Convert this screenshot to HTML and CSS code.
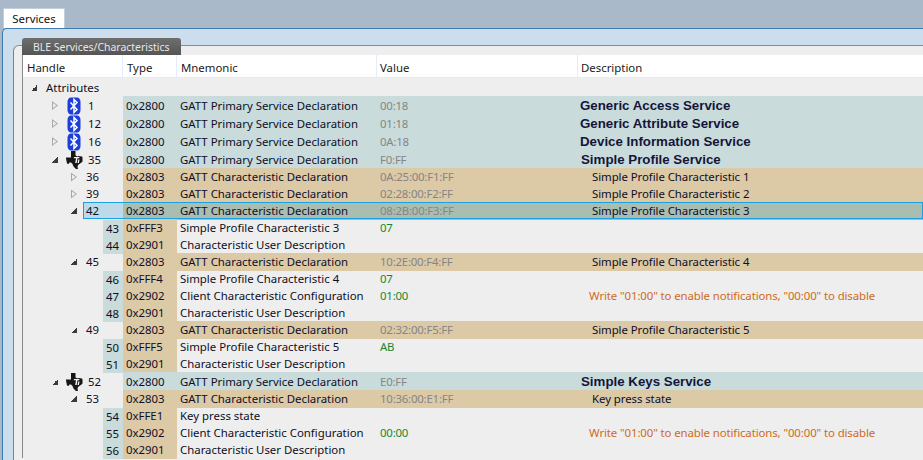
FILE: index.html
```html
<!DOCTYPE html>
<html lang="en">
<head>
<meta charset="utf-8">
<title>Services</title>
<link rel="stylesheet" href="styles.css">
</head>
<body>
<svg class="defs" width="0" height="0" aria-hidden="true">
  <symbol id="bt" viewBox="0 0 14 18">
    <path d="M4 0.500h6c2 0 3.500 2 3.500 4.500v8c0 2.500-1.500 4.500-3.500 4.500h-6c-2 0-3.500-2-3.500-4.500v-8c0-2.500 1.500-4.500 3.500-4.500z" fill="#1b3fd8"/>
    <path d="M3.500 5.500l6.500 7-3 3v-13l3 3-6.500 7" fill="none" stroke="#fff" stroke-width="1.500"/>
  </symbol>
  <symbol id="ti" viewBox="0 0 17 18">
    <path d="M5 0h4.500v4.500l2 1 1-.5 3.500.5.500 1v4l-1 1-3.500 2.500-.5 2 .5 2h-2l-2.500-2.500-1-2.500-1.500-1.500h-1.500l-1 1.500-1.500-.5-.5-2.500L0 7.500V6.500h5z" fill="#161616"/>
    <path d="M8 6h5.500l-.3 1.200h-1.700l-.8 4.800H9.200l.8-4.800H7.800z" fill="#f2f2f2"/>
    <path d="M12.200 8.500h1.300l-.6 3.500h-1.300z" fill="#f2f2f2"/>
  </symbol>
</svg>
<div class="app">
  <nav class="tabbar"><div class="tab">Services</div></nav>
  <main class="panel">
    <section class="group">
      <div class="group-title">BLE Services/Characteristics</div>
      <div class="table">
        <div class="row head"><div class="h1">Handle</div><div class="h2">Type</div><div class="h3">Mnemonic</div><div class="h4">Value</div><div class="h5">Description</div></div>
        <div class="row tall root"><div class="handle"><i class="arrow open"></i><span>Attributes</span></div></div>

        <div class="row tall svc"><div class="handle lv1"><i class="arrow closed"></i><svg class="icon bt"><use href="#bt"/></svg><span>1</span></div><div class="type">0x2800</div><div class="mn">GATT Primary Service Declaration</div><div class="val grey">00:18</div><div class="desc bold">Generic Access Service</div></div>
        <div class="row tall svc"><div class="handle lv1"><i class="arrow closed"></i><svg class="icon bt"><use href="#bt"/></svg><span>12</span></div><div class="type">0x2800</div><div class="mn">GATT Primary Service Declaration</div><div class="val grey">01:18</div><div class="desc bold">Generic Attribute Service</div></div>
        <div class="row tall svc"><div class="handle lv1"><i class="arrow closed"></i><svg class="icon bt"><use href="#bt"/></svg><span>16</span></div><div class="type">0x2800</div><div class="mn">GATT Primary Service Declaration</div><div class="val grey">0A:18</div><div class="desc bold">Device Information Service</div></div>
        <div class="row tall svc"><div class="handle lv1"><i class="arrow open"></i><svg class="icon ti"><use href="#ti"/></svg><span>35</span></div><div class="type">0x2800</div><div class="mn">GATT Primary Service Declaration</div><div class="val grey">F0:FF</div><div class="desc bold shift">Simple Profile Service</div></div>

        <div class="row chr"><div class="handle lv2"><i class="arrow closed"></i><span>36</span></div><div class="type">0x2803</div><div class="mn">GATT Characteristic Declaration</div><div class="val grey">0A:25:00:F1:FF</div><div class="desc sub">Simple Profile Characteristic 1</div></div>
        <div class="row chr"><div class="handle lv2"><i class="arrow closed"></i><span>39</span></div><div class="type">0x2803</div><div class="mn">GATT Characteristic Declaration</div><div class="val grey">02:28:00:F2:FF</div><div class="desc sub">Simple Profile Characteristic 2</div></div>
        <div class="row chr selected"><div class="handle lv2"><i class="arrow open"></i><span>42</span></div><div class="type">0x2803</div><div class="mn">GATT Characteristic Declaration</div><div class="val grey">08:2B:00:F3:FF</div><div class="desc sub">Simple Profile Characteristic 3</div></div>
        <div class="row attr"><div class="handle lv3"><span>43</span></div><div class="type">0xFFF3</div><div class="mn">Simple Profile Characteristic 3</div><div class="val green">07</div></div>
        <div class="row attr"><div class="handle lv3"><span>44</span></div><div class="type">0x2901</div><div class="mn">Characteristic User Description</div></div>

        <div class="row chr"><div class="handle lv2"><i class="arrow open"></i><span>45</span></div><div class="type">0x2803</div><div class="mn">GATT Characteristic Declaration</div><div class="val grey">10:2E:00:F4:FF</div><div class="desc sub">Simple Profile Characteristic 4</div></div>
        <div class="row attr"><div class="handle lv3"><span>46</span></div><div class="type">0xFFF4</div><div class="mn">Simple Profile Characteristic 4</div><div class="val green">07</div></div>
        <div class="row attr"><div class="handle lv3"><span>47</span></div><div class="type">0x2902</div><div class="mn">Client Characteristic Configuration</div><div class="val green">01:00</div><div class="desc note">Write "01:00" to enable notifications, "00:00" to disable</div></div>
        <div class="row attr"><div class="handle lv3"><span>48</span></div><div class="type">0x2901</div><div class="mn">Characteristic User Description</div></div>

        <div class="row chr"><div class="handle lv2"><i class="arrow open"></i><span>49</span></div><div class="type">0x2803</div><div class="mn">GATT Characteristic Declaration</div><div class="val grey">02:32:00:F5:FF</div><div class="desc sub">Simple Profile Characteristic 5</div></div>
        <div class="row attr"><div class="handle lv3"><span>50</span></div><div class="type">0xFFF5</div><div class="mn">Simple Profile Characteristic 5</div><div class="val green">AB</div></div>
        <div class="row attr"><div class="handle lv3"><span>51</span></div><div class="type">0x2901</div><div class="mn">Characteristic User Description</div></div>

        <div class="row tall svc"><div class="handle lv1"><i class="arrow open"></i><svg class="icon ti"><use href="#ti"/></svg><span>52</span></div><div class="type">0x2800</div><div class="mn">GATT Primary Service Declaration</div><div class="val grey">E0:FF</div><div class="desc bold shift">Simple Keys Service</div></div>
        <div class="row chr"><div class="handle lv2"><i class="arrow open"></i><span>53</span></div><div class="type">0x2803</div><div class="mn">GATT Characteristic Declaration</div><div class="val grey">10:36:00:E1:FF</div><div class="desc sub">Key press state</div></div>
        <div class="row attr"><div class="handle lv3"><span>54</span></div><div class="type">0xFFE1</div><div class="mn">Key press state</div></div>
        <div class="row attr"><div class="handle lv3"><span>55</span></div><div class="type">0x2902</div><div class="mn">Client Characteristic Configuration</div><div class="val green">00:00</div><div class="desc note">Write "01:00" to enable notifications, "00:00" to disable</div></div>
        <div class="row attr"><div class="handle lv3"><span>56</span></div><div class="type">0x2901</div><div class="mn">Characteristic User Description</div></div>
      </div>
    </section>
  </main>
</div>
</body>
</html>
```
FILE: styles.css
```css
* { box-sizing: border-box; }
html, body { margin: 0; height: 100%; overflow: hidden; }
body { background: #a9b9c9; font: 11.4px/18px "Noto Sans", "Open Sans", sans-serif; color: #0e0e26; }
.defs { position: absolute; }
.app { width: 923px; height: 460px; display: flex; flex-direction: column; overflow: hidden; }
.tabbar { height: 28px; padding: 8px 0 0 3px; flex: none; }
.tab { width: 62px; height: 20px; background: #fff; border: 1px solid #c4ced8; border-bottom: 0; text-align: center; line-height: 20px; color: #111; }
.panel { flex: 1; min-height: 0; margin-left: 2px; padding: 16px 0 0 10px; background: #ccdded; border: 1px solid #3d7bb0; border-right: 0; border-bottom: 0; border-top-left-radius: 5px; }
.group { height: 100%; background: #eee; border-top: 1px solid #8c8c8c; border-left: 1px solid #808080; border-top-left-radius: 6px; padding-left: 8px; }
.group-title { width: 159px; height: 17px; margin-top: -8px; background: linear-gradient(#6e6e6e, #555); border-radius: 3px 3px 0 0; color: #e8e8e8; padding-left: 11px; font-size: 10.45px; line-height: 18px; white-space: nowrap; }
.table { border-left: 1px solid #8a8a8a; }
.row { display: grid; grid-template-columns: 100px 54px 200px 201px 1fr; height: 17px; align-items: stretch; white-space: nowrap; position: relative; }
.row.tall { height: 18px; line-height: 19px; }
.row > div { min-width: 0; }
.head { height: 23px; background: #fff; line-height: 25px; color: #1a1a1a; border-bottom: 1px solid #e3edf9; }
.head > div { border-right: 1px solid #e3edf9; }
.head > div:last-child { border-right: 0; }
.h1 { padding-left: 4px; }
.h2 { padding-left: 4px; }
.h3 { padding-left: 4px; }
.h4 { padding-left: 3px; }
.h5 { padding-left: 3px; }
.handle { display: flex; align-items: center; }
.root .handle { grid-column: 1 / -1; padding-left: 8px; }
.lv1 { padding-left: 29px; }
.lv2 { padding-left: 48px; }
.lv3 { padding-left: 80px; }
.lv3 span { display: block; width: 20px; height: 17px; padding-left: 3px; background: #c9dcdb; }
.arrow { flex: none; display: block; margin-right: 9px; }
.arrow.open { background: linear-gradient(135deg, transparent 50%, #3a3a3a 50%); width: 6px; height: 6px; }
.arrow.closed { width: 6px; height: 9px; background: #a8a8a8; clip-path: polygon(0 0, 100% 50%, 0 100%, 0 0, 1px 2px, 1px 7px, 4.500px 4.500px, 1px 2px); }
.icon { flex: none; width: 14px; height: 18px; margin-right: 7px; }
.icon.ti { width: 17px; height: 18px; margin-left: -1px; margin-right: 5px; }
.type { padding-left: 3px; background: #c9dcdb; }
.mn { padding-left: 3px; }
.val { padding-left: 3px; letter-spacing: -0.2px; }
.desc { padding-left: 2px; }
.svc .type, .svc .mn, .svc .val, .svc .desc { background: #c9dcdb; }
.chr .type, .chr .mn, .chr .val, .chr .desc { background: #dcc9a6; }
.attr .type { background: #dcc9a6; }
.bold { font: bold 13.3px/19px "Liberation Sans", Arial, sans-serif; color: #15153a; }
.shift { padding-left: 3px; }
.sub { padding-left: 14px; letter-spacing: -0.06px; }
.note { padding-left: 11px; color: #cf6a1c; letter-spacing: -0.1px; }
.grey { color: #858585; }
.green { color: #17872f; }
.selected .handle { position: relative; z-index: 1; }
.selected::before { content: ""; position: absolute; left: 61px; width: 39px; top: 0; bottom: 0; background: #bedaea; }
.selected .type, .selected .mn, .selected .val, .selected .desc { background: #aabdb1; }
.selected::after { content: ""; position: absolute; left: 60px; right: 0; top: 0; bottom: 0; border: 1px solid #1ba1e2; pointer-events: none; z-index: 2; }
```
